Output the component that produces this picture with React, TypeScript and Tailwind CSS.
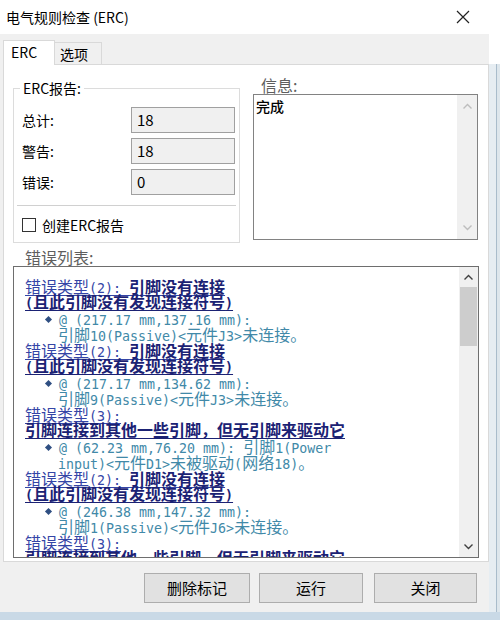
import React from "react";

const ASCII_RUN = /([\x20-\x7e]+)/;

// SimSun-like mix: CJK full width, ASCII half width
function Mix({ text }: { text: string }) {
  return (
    <>
      {text.split(ASCII_RUN).map((part, i) =>
        part === "" ? null : /^[\x20-\x7e]+$/.test(part) ? (
          <span key={i} className="font-['DejaVu_Sans_Mono',monospace] text-[13.3px]">
            {part}
          </span>
        ) : (
          <span key={i}>{part}</span>
        )
      )}
    </>
  );
}

// last entry is cut by the list's bottom edge, so it has no location lines
const ERRORS = [
  {
    head: "错误类型(2): ",
    bold: "引脚没有连接",
    sub: "(且此引脚没有发现连接符号)",
    at: ["@ (217.17 mm,137.16 mm):", "引脚10(Passive)<元件J3>未连接。"],
  },
  {
    head: "错误类型(2): ",
    bold: "引脚没有连接",
    sub: "(且此引脚没有发现连接符号)",
    at: ["@ (217.17 mm,134.62 mm):", "引脚9(Passive)<元件J3>未连接。"],
  },
  {
    head: "错误类型(3):",
    bold: "",
    sub: "引脚连接到其他一些引脚，但无引脚来驱动它",
    at: ["@ (62.23 mm,76.20 mm): 引脚1(Power", "input)<元件D1>未被驱动(网络18)。"],
  },
  {
    head: "错误类型(2): ",
    bold: "引脚没有连接",
    sub: "(且此引脚没有发现连接符号)",
    at: ["@ (246.38 mm,147.32 mm):", "引脚1(Passive)<元件J6>未连接。"],
  },
  {
    head: "错误类型(3):",
    bold: "",
    sub: "引脚连接到其他一些引脚，但无引脚来驱动它",
    at: [] as string[],
  },
];

const STATS = [
  { label: "总计:", value: "18" },
  { label: "警告:", value: "18" },
  { label: "错误:", value: "0" },
];

function Chevron({ up, color }: { up?: boolean; color: string }) {
  return (
    <svg width="9" height="6" viewBox="0 0 9 6" fill="none">
      <path
        d={up ? "M0.5 5.5L4.5 1.5L8.5 5.5" : "M0.5 0.5L4.5 4.5L8.5 0.5"}
        stroke={color}
        strokeWidth="1.4"
      />
    </svg>
  );
}

export default function App() {
  return (
    <div className="w-[500px] h-[620px] bg-white flex flex-col overflow-hidden font-['Noto_Sans_CJK_SC',sans-serif] text-black">
      {/* Title bar */}
      <div className="h-[34px] flex items-center justify-between pl-[6px] pr-[30px] shrink-0">
        <span className="text-[14px] leading-none">电气规则检查 (ERC)</span>
        <svg width="14" height="14" viewBox="0 0 14 14">
          <path d="M1 1L13 13M13 1L1 13" stroke="#222" strokeWidth="1.2" />
        </svg>
      </div>

      <div className="flex flex-1 min-h-0">
        <div className="w-[489px] flex flex-col bg-[#f0f0f0]">
          {/* Tabs */}
          <div className="h-[30px] flex items-end pl-[3px] shrink-0">
            <div className="w-[52px] h-[25px] bg-white border border-b-0 border-[#d9d9d9] pl-[7px] text-[14px] leading-[22px] relative top-[1px]">
              ERC
            </div>
            <div className="w-[47px] h-[22px] bg-[#f0f0f0] border border-l-0 border-b-0 border-[#d9d9d9] pl-[5px] text-[14px] leading-[22px]">
              选项
            </div>
          </div>

          {/* Tab panel */}
          <div className="ml-[3px] h-[498px] bg-white border border-[#d9d9d9] flex flex-col shrink-0">
            <div className="flex">
              {/* ERC report group */}
              <div className="ml-[9px] mt-[23px] w-[227px] h-[155px] border border-[#dcdcdc] relative">
                <span className="absolute -top-[11px] left-[6px] bg-white px-[3px] text-[14px] leading-[20px]">
                  ERC报告:
                </span>
                <div className="pt-[18px] pl-[8px] flex flex-col gap-[5px]">
                  {STATS.map((s) => (
                    <div key={s.label} className="flex items-center h-[26px]">
                      <span className="w-[109px] text-[14px]">{s.label}</span>
                      <div className="w-[104px] h-[26px] border border-[#a0a0a0] bg-[#f0f0f0] pl-[5px] text-[15px] leading-[24px]">
                        {s.value}
                      </div>
                    </div>
                  ))}
                </div>
                <div className="mx-[3px] mt-[10px] border-t border-[#d0d0d0] border-b border-b-white" />
                <div className="flex items-center pl-[8px] mt-[9px] gap-[6px]">
                  <div className="w-[14px] h-[14px] border border-[#333] bg-white" />
                  <span className="text-[14px] leading-[18px]">创建ERC报告</span>
                </div>
              </div>

              {/* Info */}
              <div className="ml-[13px] mt-[11px] flex flex-col">
                <span className="pl-[8px] h-[18px] text-[16px] leading-[18px] text-[#5e5e5e]">信息:</span>
                <div className="w-[225px] h-[146px] border border-[#828282] flex">
                  <div className="flex-1 pl-[2px] pt-[1px] text-[14px] leading-[20px] font-medium">完成</div>
                  <div className="w-[20px] bg-[#f0f0f0] flex flex-col items-center justify-between py-[8px]">
                    <Chevron up color="#bdbdbd" />
                    <Chevron color="#bdbdbd" />
                  </div>
                </div>
              </div>
            </div>

            {/* Error list */}
            <span className="ml-[21px] mt-[5px] h-[18px] text-[16px] leading-[18px] text-[#5e5e5e]">错误列表:</span>
            <div className="ml-[9px] w-[466px] h-[292px] border border-[#6e6e6e] flex">
              <div className="flex-1 overflow-hidden pl-[11px] pt-[11.5px] text-[16px] whitespace-pre">
                {ERRORS.map((e, i) => (
                  <div key={i}>
                    <div className="h-[15px] leading-[15px] text-[#3445a6] underline decoration-1 underline-offset-[2px]">
                      <Mix text={e.head} />
                      {e.bold && (
                        <span className="font-bold text-[#1b2274]">
                          <Mix text={e.bold} />
                        </span>
                      )}
                    </div>
                    <div className="h-[18px] leading-[15px] font-bold text-[#1b2274] underline decoration-1 underline-offset-[2px]">
                      <Mix text={e.sub} />
                    </div>
                    {e.at.length > 0 && (
                      <>
                        <div className="h-[15px] leading-[15px] flex items-center text-[#4189a8]">
                          <span className="w-[5px] h-[5px] rotate-45 bg-[#2f4f82] ml-[21px] mr-[8px]" />
                          <span>
                            <Mix text={e.at[0]} />
                          </span>
                        </div>
                        <div className="h-[16px] leading-[15px] pl-[33px] text-[#4189a8]">
                          <Mix text={e.at[1]} />
                        </div>
                      </>
                    )}
                  </div>
                ))}
              </div>
              <div className="w-[19px] bg-[#f0f0f0] flex flex-col">
                <div className="h-[20px] flex items-center justify-center">
                  <Chevron up color="#404040" />
                </div>
                <div className="mx-[1px] h-[59px] bg-[#cdcdcd]" />
                <div className="flex-1" />
                <div className="h-[20px] flex items-center justify-center">
                  <Chevron color="#404040" />
                </div>
              </div>
            </div>
          </div>

          {/* Buttons */}
          <div className="flex-1 flex items-start justify-end pt-[11px] pr-[12px]">
            <button className="w-[106px] h-[30px] bg-[#e1e1e1] border border-[#adadad] text-[15px] leading-[28px]">删除标记</button>
            <button className="ml-[9px] w-[104px] h-[30px] bg-[#e1e1e1] border border-[#adadad] text-[15px] leading-[28px]">运行</button>
            <button className="ml-[11px] w-[103px] h-[30px] bg-[#e1e1e1] border border-[#adadad] text-[15px] leading-[28px]">关闭</button>
          </div>
        </div>

        {/* Window edge */}
        <div className="mt-[30px] flex">
          <div className="w-[7px] bg-[#e6edf2]" />
          <div className="w-[1px] bg-[#a9bccb]" />
          <div className="w-[3px] bg-[#dde6ec]" />
        </div>
      </div>

      <div className="h-[8px] bg-[#c9d9e6] shrink-0" />
    </div>
  );
}
